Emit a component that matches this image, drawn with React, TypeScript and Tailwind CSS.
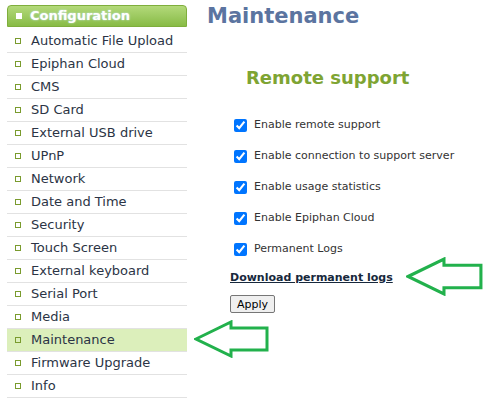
import React from "react";

const menu = [
  "Automatic File Upload",
  "Epiphan Cloud",
  "CMS",
  "SD Card",
  "External USB drive",
  "UPnP",
  "Network",
  "Date and Time",
  "Security",
  "Touch Screen",
  "External keyboard",
  "Serial Port",
  "Media",
  "Maintenance",
  "Firmware Upgrade",
  "Info",
];

const options = [
  "Enable remote support",
  "Enable connection to support server",
  "Enable usage statistics",
  "Enable Epiphan Cloud",
  "Permanent Logs",
];

function Arrow({ className }: { className: string }) {
  // outlined left-pointing arrow used as annotation
  return (
    <svg className={className} viewBox="0 0 76 38" fill="none">
      <path
        d="M2 19 L37 2 L37 8 L73 8 L73 30 L37 30 L37 36 Z"
        stroke="#22b14c"
        strokeWidth="3"
        strokeLinejoin="miter"
      />
    </svg>
  );
}

export default function App() {
  return (
    <div className="relative h-[409px] w-[495px] overflow-hidden bg-white font-['DejaVu_Sans',Verdana,sans-serif]">
      <div className="flex">
        <div className="ml-[7px] mt-[5px] w-[180px] shrink-0">
          <div className="mb-[3px] flex h-[22px] items-center gap-[8px] rounded-t-[4px] border border-[#7fae3c] bg-gradient-to-b from-[#b3d97a] to-[#88bb45] pl-[8px] text-[13px] font-bold text-white [text-shadow:0_0_2px_#cfe8ff]">
            <span className="h-[6px] w-[6px] bg-white" />
            Configuration
          </div>
          {menu.map((item) => (
            <div
              key={item}
              className={`flex h-[23px] items-center border-b border-[#e2e2e2] pl-[8px] text-[13px] text-[#2b3445] ${
                item === "Maintenance" ? "bg-[#dcefbb]" : ""
              }`}
            >
              <span className="mr-[10px] h-[6px] w-[6px] border border-[#7a9b2e]" />
              {item}
            </div>
          ))}
        </div>

        <div className="ml-[20px] flex-1">
          <h1 className="mt-[3px] text-[21px] font-bold leading-[26px] text-[#5b74a0]">Maintenance</h1>
          <h2 className="ml-[39px] mt-[38px] text-[18px] font-bold leading-[22px] text-[#7ea433]">Remote support</h2>
          <div className="mt-[28px] flex flex-col gap-[15px] pl-[27px]">
            {options.map((opt) => (
              <label key={opt} className="flex h-[16px] items-center text-[11px] text-[#333]">
                <input type="checkbox" defaultChecked className="m-0 mr-[7px] h-[13px] w-[13px] accent-[#0075ff]" />
                {opt}
              </label>
            ))}
          </div>
          <a href="#" className="ml-[23px] mt-[14px] block text-[11px] font-bold leading-[14px] text-[#17283c] underline">
            Download permanent logs
          </a>
          <button className="ml-[23px] mt-[10px] h-[18px] rounded-[2px] border border-[#767676] bg-[#efefef] px-[6px] text-[11px] leading-none text-black">
            Apply
          </button>
        </div>
      </div>

      <Arrow className="absolute left-[194px] top-[320px] h-[38px] w-[76px]" />
      <Arrow className="absolute left-[406px] top-[257px] h-[39px] w-[78px]" />
    </div>
  );
}
